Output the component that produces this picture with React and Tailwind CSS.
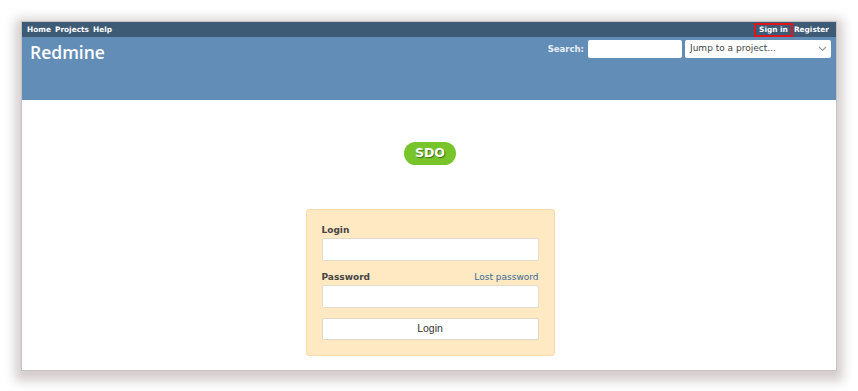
import React from 'react';

const font = { fontFamily: '"DejaVu Sans", Verdana, sans-serif' };

const TopMenu = () => (
  <div className="flex h-[15px] items-center justify-between bg-[#3e5b76] pl-[5px] pr-[7px] text-[7.4px] font-bold text-white">
    <div className="flex gap-[4px]">
      <span>Home</span>
      <span>Projects</span>
      <span>Help</span>
    </div>
    <div className="flex items-center">
      <span className="border-2 border-[#e0141b] px-[3px] leading-[10px]">Sign in</span>
      <span className="ml-[1px]">Register</span>
    </div>
  </div>
);

const Header = () => (
  <div className="flex h-[63px] items-start justify-between bg-[#628db6] pl-[8px] pr-[5px]">
    <h1
      className="mt-[4px] text-[17.5px] font-semibold leading-[22px] text-white"
      style={{ fontFamily: '"Open Sans", "DejaVu Sans", sans-serif' }}
    >
      Redmine
    </h1>
    <div className="mt-[3px] flex items-center">
      <span className="mr-[4px] text-[8.5px] font-bold text-[#e8eef5]">Search:</span>
      <div className="h-[18px] w-[94px] rounded-[2px] bg-white" />
      <div className="ml-[3px] flex h-[18px] w-[146px] items-center justify-between rounded-[2px] bg-white pl-[5px] pr-[4px] text-[9px] text-[#444]">
        <span>Jump to a project...</span>
        <svg width="9" height="6" viewBox="0 0 9 6" fill="none" stroke="#999" strokeWidth="1.1">
          <path d="M1 1l3.5 3.5L8 1" />
        </svg>
      </div>
    </div>
  </div>
);

const LoginBox = () => (
  <div className="w-[249px] rounded-[3px] border border-[#fadca6] bg-[#fee9c3] px-[15px] pb-[15px] pt-[13px] text-[9px] text-[#444]">
    <label className="block font-bold leading-[14px]">Login</label>
    <div className="mt-[1px] h-[23px] rounded-[2px] border border-[#e3dccd] bg-white" />
    <div className="mt-[9px] flex items-end justify-between leading-[14px]">
      <span className="font-bold">Password</span>
      <span className="text-[#3a6894]">Lost password</span>
    </div>
    <div className="mt-[1px] h-[23px] rounded-[2px] border border-[#e3dccd] bg-white" />
    <div
      className="mt-[10px] flex h-[22px] items-center justify-center rounded-[2px] border border-[#e0d8c6] bg-white text-[#333]"
      style={{ fontFamily: '"Liberation Sans", Arial, sans-serif', fontSize: '10.5px' }}
    >
      Login
    </div>
  </div>
);

export default function App() {
  return (
    <div className="h-[391px] w-[858px] overflow-hidden bg-white pl-[21px] pt-[21px]" style={font}>
      <div className="flex h-[350px] w-[816px] flex-col border border-[#c4c4c4] bg-white shadow-[0px_4px_10px_6px_rgba(150,130,130,0.4)]">
        <TopMenu />
        <Header />
        <div className="flex flex-1 flex-col items-center bg-white">
          <div className="ml-[2px] mt-[42px] flex h-[23px] w-[52px] items-center justify-center rounded-full bg-[#78c52b] text-[12.5px] font-bold text-white [text-shadow:1px_1px_1px_rgba(0,0,0,0.45)]">
            SDO
          </div>
          <div className="ml-[2px] mt-[44px]">
            <LoginBox />
          </div>
        </div>
      </div>
    </div>
  );
}
